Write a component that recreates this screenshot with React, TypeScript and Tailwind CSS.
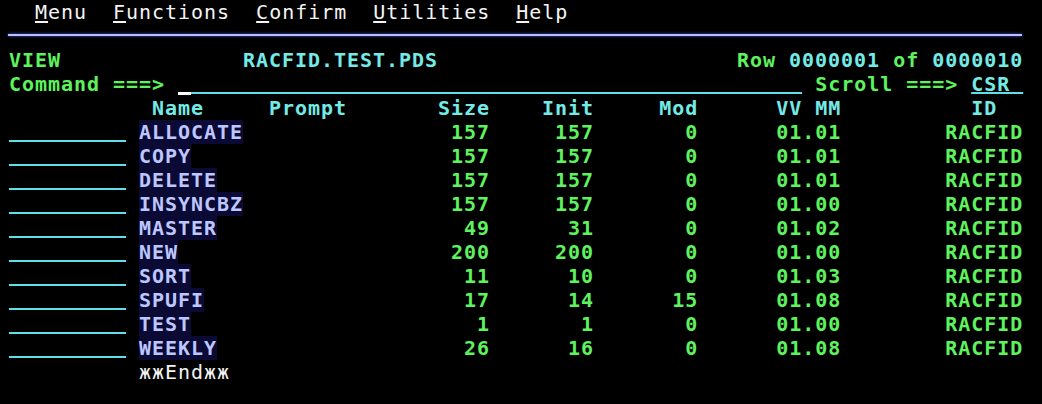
import * as React from 'react';

/** One cell run on the 3270 grid: starts at a column, has its own colour */
type Seg = { col: number; text: string; cls?: string };

const GREEN = 'text-[#5ef25e]';
const TURQ = 'text-[#74eae6]';
const BLUE = 'text-[#bcc6ff] bg-[#0a0a34]';
const WHITE = 'text-[#f2f2f2]';
const FIELD = 'underline decoration-2 underline-offset-[1px] decoration-[#5fe0e8]';

const members: [string, number, number, number, string][] = [
  ['ALLOCATE', 157, 157, 0, '01.01'],
  ['COPY', 157, 157, 0, '01.01'],
  ['DELETE', 157, 157, 0, '01.01'],
  ['INSYNCBZ', 157, 157, 0, '01.00'],
  ['MASTER', 49, 31, 0, '01.02'],
  ['NEW', 200, 200, 0, '01.00'],
  ['SORT', 11, 10, 0, '01.03'],
  ['SPUFI', 17, 14, 15, '01.08'],
  ['TEST', 1, 1, 0, '01.00'],
  ['WEEKLY', 26, 16, 0, '01.08'],
];

/** Right-align a number so its last digit lands on `end` */
const num = (end: number, n: number, cls: string): Seg => {
  const t = String(n);
  return { col: end - t.length + 1, text: t, cls };
};

/** A screen row: pads with blanks between runs, like a terminal buffer */
const Line: React.FC<{ segs: Seg[] }> = ({ segs }) => {
  let cur = 0;
  const out: React.ReactNode[] = [];
  segs.forEach((s, i) => {
    if (s.col > cur) out.push(<span key={`g${i}`}>{' '.repeat(s.col - cur)}</span>);
    out.push(
      <span key={i} className={s.cls}>
        {s.text}
      </span>
    );
    cur = s.col + s.text.length;
  });
  return <div className="h-6 whitespace-pre leading-6">{out}</div>;
};

const MenuItem: React.FC<{ label: string }> = ({ label }) => (
  <>
    <span className="underline decoration-2 underline-offset-[2px]">{label[0]}</span>
    {label.slice(1)}
  </>
);

export default function App() {
  return (
    <div className="h-[404px] w-[1042px] overflow-hidden bg-black pl-[9px] font-['DejaVu_Sans_Mono',monospace] text-[20px] font-bold tracking-[0.96px]">
      {/* Action bar */}
      <div className="h-6 whitespace-pre font-normal leading-6 text-[#f4f4f4]">
        {'  '}
        <MenuItem label="Menu" />
        {'  '}
        <MenuItem label="Functions" />
        {'  '}
        <MenuItem label="Confirm" />
        {'  '}
        <MenuItem label="Utilities" />
        {'  '}
        <MenuItem label="Help" />
      </div>

      {/* Separator */}
      <div className="h-6 pt-[10px]">
        <div className="ml-[-1px] h-[2px] w-[1014px] bg-[#b8c0ff] shadow-[0_0_3px_#5060ff]" />
      </div>

      <Line
        segs={[
          { col: 0, text: 'VIEW', cls: GREEN },
          { col: 18, text: 'RACFID.TEST.PDS', cls: TURQ },
          { col: 56, text: 'Row', cls: GREEN },
          { col: 60, text: '0000001', cls: TURQ },
          { col: 68, text: 'of', cls: GREEN },
          { col: 71, text: '0000010', cls: TURQ },
        ]}
      />
      <Line
        segs={[
          { col: 0, text: 'Command ===>', cls: GREEN },
          { col: 13, text: ' ', cls: 'underline decoration-[3px] underline-offset-[1px] decoration-white' },
          { col: 14, text: ' '.repeat(47), cls: FIELD },
          { col: 62, text: 'Scroll ===>', cls: GREEN },
          { col: 74, text: 'CSR ', cls: `${TURQ} ${FIELD}` },
        ]}
      />
      <Line
        segs={[
          { col: 11, text: 'Name', cls: TURQ },
          { col: 20, text: 'Prompt', cls: TURQ },
          { col: 33, text: 'Size', cls: TURQ },
          { col: 41, text: 'Init', cls: TURQ },
          { col: 50, text: 'Mod', cls: TURQ },
          { col: 59, text: 'VV', cls: TURQ },
          { col: 62, text: 'MM', cls: TURQ },
          { col: 74, text: 'ID', cls: TURQ },
        ]}
      />

      {members.map(([name, size, init, mod, vvmm]) => (
        <Line
          key={name}
          segs={[
            { col: 0, text: ' '.repeat(9), cls: FIELD },
            { col: 10, text: name, cls: BLUE },
            num(36, size, GREEN),
            num(44, init, GREEN),
            num(52, mod, GREEN),
            { col: 59, text: vvmm, cls: GREEN },
            { col: 72, text: 'RACFID', cls: GREEN },
          ]}
        />
      ))}

      <Line segs={[{ col: 10, text: 'жжEndжж', cls: `${WHITE} font-normal` }]} />
    </div>
  );
}
